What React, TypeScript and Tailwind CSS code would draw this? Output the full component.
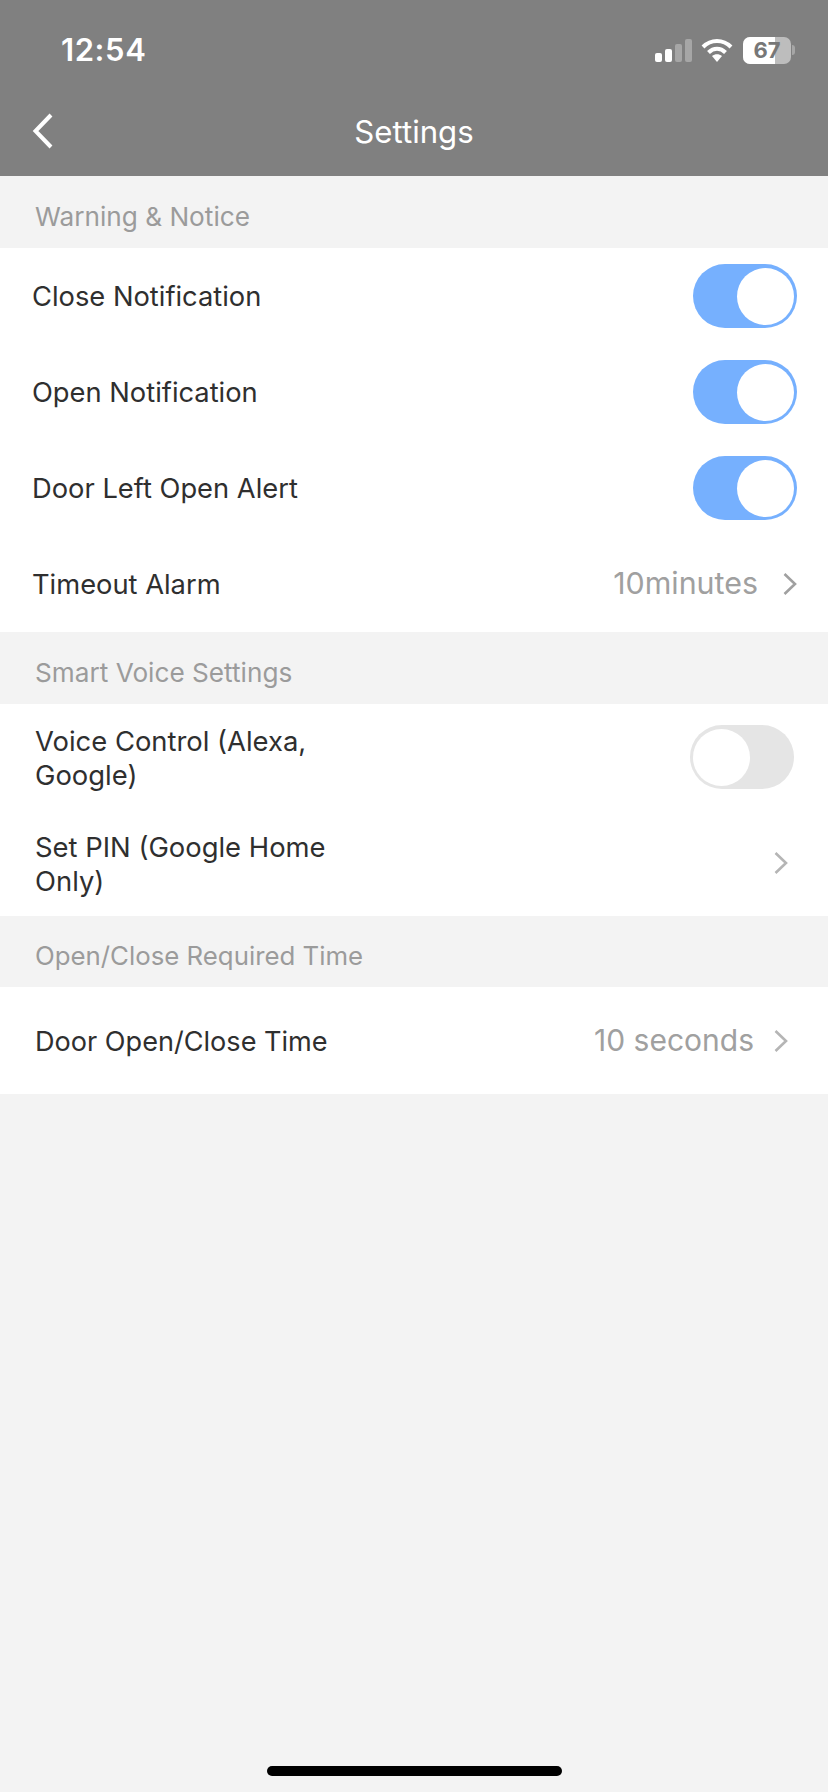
const font = "font-['Inter','Liberation_Sans',sans-serif]";

const Chevron = ({ className }: { className: string }) => (
    <svg className={className} viewBox="0 0 16 24" fill="none">
        <path d="M2.5 2 L13 12 L2.5 22" stroke="currentColor" strokeWidth="2.6" />
    </svg>
);

const Toggle = ({ on }: { on: boolean }) =>
    on ? (
        <div className="w-[104px] h-[64px] rounded-full bg-[#76b0fe] flex items-center justify-end pr-[3px]">
            <div className="w-[57px] h-[57px] rounded-full bg-white" />
        </div>
    ) : (
        <div className="w-[104px] h-[64px] rounded-full bg-[#e5e5e5] flex items-center pl-[3px]">
            <div className="w-[57px] h-[57px] rounded-full bg-white" />
        </div>
    );

const SectionLabel = ({ text, className }: { text: string; className: string }) => (
    <div className={`flex items-center pl-[35px] pt-[9px] text-[#9b9b9b] ${className}`}>{text}</div>
);

const Value = ({ text, size, chevron }: { text?: string; size?: string; chevron: string }) => (
    <div className="flex items-center text-[#a0a0a0]">
        {text && <span className={size}>{text}</span>}
        <Chevron className={chevron} />
    </div>
);

const App = () => {
    return (
        <div className={`w-[828px] h-[1792px] bg-[#f3f3f3] flex flex-col relative overflow-hidden ${font}`}>
            <div className="h-[176px] bg-[#808080] flex flex-col text-white">
                <div className="h-[88px] flex items-center justify-between pl-[61px] pr-[33px] pt-[12px]">
                    <span className="text-[31px] font-semibold tracking-[0.6px]">12:54</span>
                    <div className="flex items-center">
                        <div className="flex items-end gap-[3px] h-[23px]">
                            <div className="w-[7px] h-[9px] rounded-[2px] bg-white" />
                            <div className="w-[7px] h-[13px] rounded-[2px] bg-white" />
                            <div className="w-[7px] h-[18px] rounded-[2px] bg-[#a6a6a6]" />
                            <div className="w-[7px] h-[23px] rounded-[2px] bg-[#a6a6a6]" />
                        </div>
                        <svg className="ml-[9px] w-[32px] h-[25px]" viewBox="0 0 32 25" fill="none">
                            <path d="M2 9 C10 1 22 1 30 9" stroke="white" strokeWidth="4" />
                            <path d="M7.5 14.5 C12.5 9.5 19.5 9.5 24.5 14.5" stroke="white" strokeWidth="4" />
                            <path d="M11 18 C14 15.5 18 15.5 21 18 L16 24 Z" fill="white" />
                        </svg>
                        <div className="ml-[10px] relative w-[48px] h-[27px] rounded-[7px] overflow-hidden bg-[#bdbdbd]">
                            <div className="absolute inset-y-0 left-0 w-[32px] bg-white" />
                            <span className="absolute inset-0 flex items-center justify-center text-[22px] font-bold text-[#777777]">
                                67
                            </span>
                        </div>
                        <div className="ml-[1px] w-[3px] h-[10px] rounded-r-full bg-[#a6a6a6]" />
                    </div>
                </div>
                <div className="relative h-[88px] flex items-center justify-center">
                    <svg className="absolute left-[32px] top-[25px] w-[22px] h-[36px]" viewBox="0 0 22 36" fill="none">
                        <path d="M19 2 L3.5 18 L19 34" stroke="white" strokeWidth="4" />
                    </svg>
                    <span className="text-[31.2px]">Settings</span>
                </div>
            </div>

            <SectionLabel text="Warning & Notice" className="h-[72px] text-[26.2px]" />
            <div className="bg-white text-[#2f2f2f] text-[27.3px] flex flex-col">
                {["Close Notification", "Open Notification", "Door Left Open Alert"].map((label) => (
                    <div key={label} className="h-[96px] flex items-center justify-between pl-[32px] pr-[31px]">
                        <span className="pt-[3px]">{label}</span>
                        <Toggle on />
                    </div>
                ))}
                <div className="h-[96px] flex items-center justify-between pl-[32px] pr-[30px]">
                    <span className="pt-[3px]">Timeout Alarm</span>
                    <Value text="10minutes" size="text-[30.4px]" chevron="ml-[24px] w-[16px] h-[24px]" />
                </div>
            </div>

            <SectionLabel text="Smart Voice Settings" className="h-[72px] text-[26.2px]" />
            <div className="bg-white text-[#2f2f2f] text-[27.4px] leading-[34px] flex flex-col">
                <div className="h-[106px] flex items-center justify-between pl-[35px] pr-[34px]">
                    <span className="w-[300px] pt-[2px]">Voice Control (Alexa, Google)</span>
                    <Toggle on={false} />
                </div>
                <div className="h-[106px] flex items-center justify-between pl-[35px] pr-[39px]">
                    <span className="w-[300px] pt-[2px]">Set PIN (Google Home Only)</span>
                    <Value chevron="w-[16px] h-[24px] text-[#b5b5b5]" />
                </div>
            </div>

            <SectionLabel text="Open/Close Required Time" className="h-[71px] text-[25.8px]" />
            <div className="bg-white text-[#2f2f2f] text-[27.1px] h-[107px] flex items-center justify-between pl-[35px] pr-[39px]">
                <span className="pt-[3px]">Door Open/Close Time</span>
                <Value text="10 seconds" size="text-[30px]" chevron="ml-[19px] w-[16px] h-[24px] text-[#b5b5b5]" />
            </div>

            <div className="absolute bottom-[16px] left-[267px] w-[295px] h-[10px] rounded-full bg-black" />
        </div>
    );
};

export default App;
